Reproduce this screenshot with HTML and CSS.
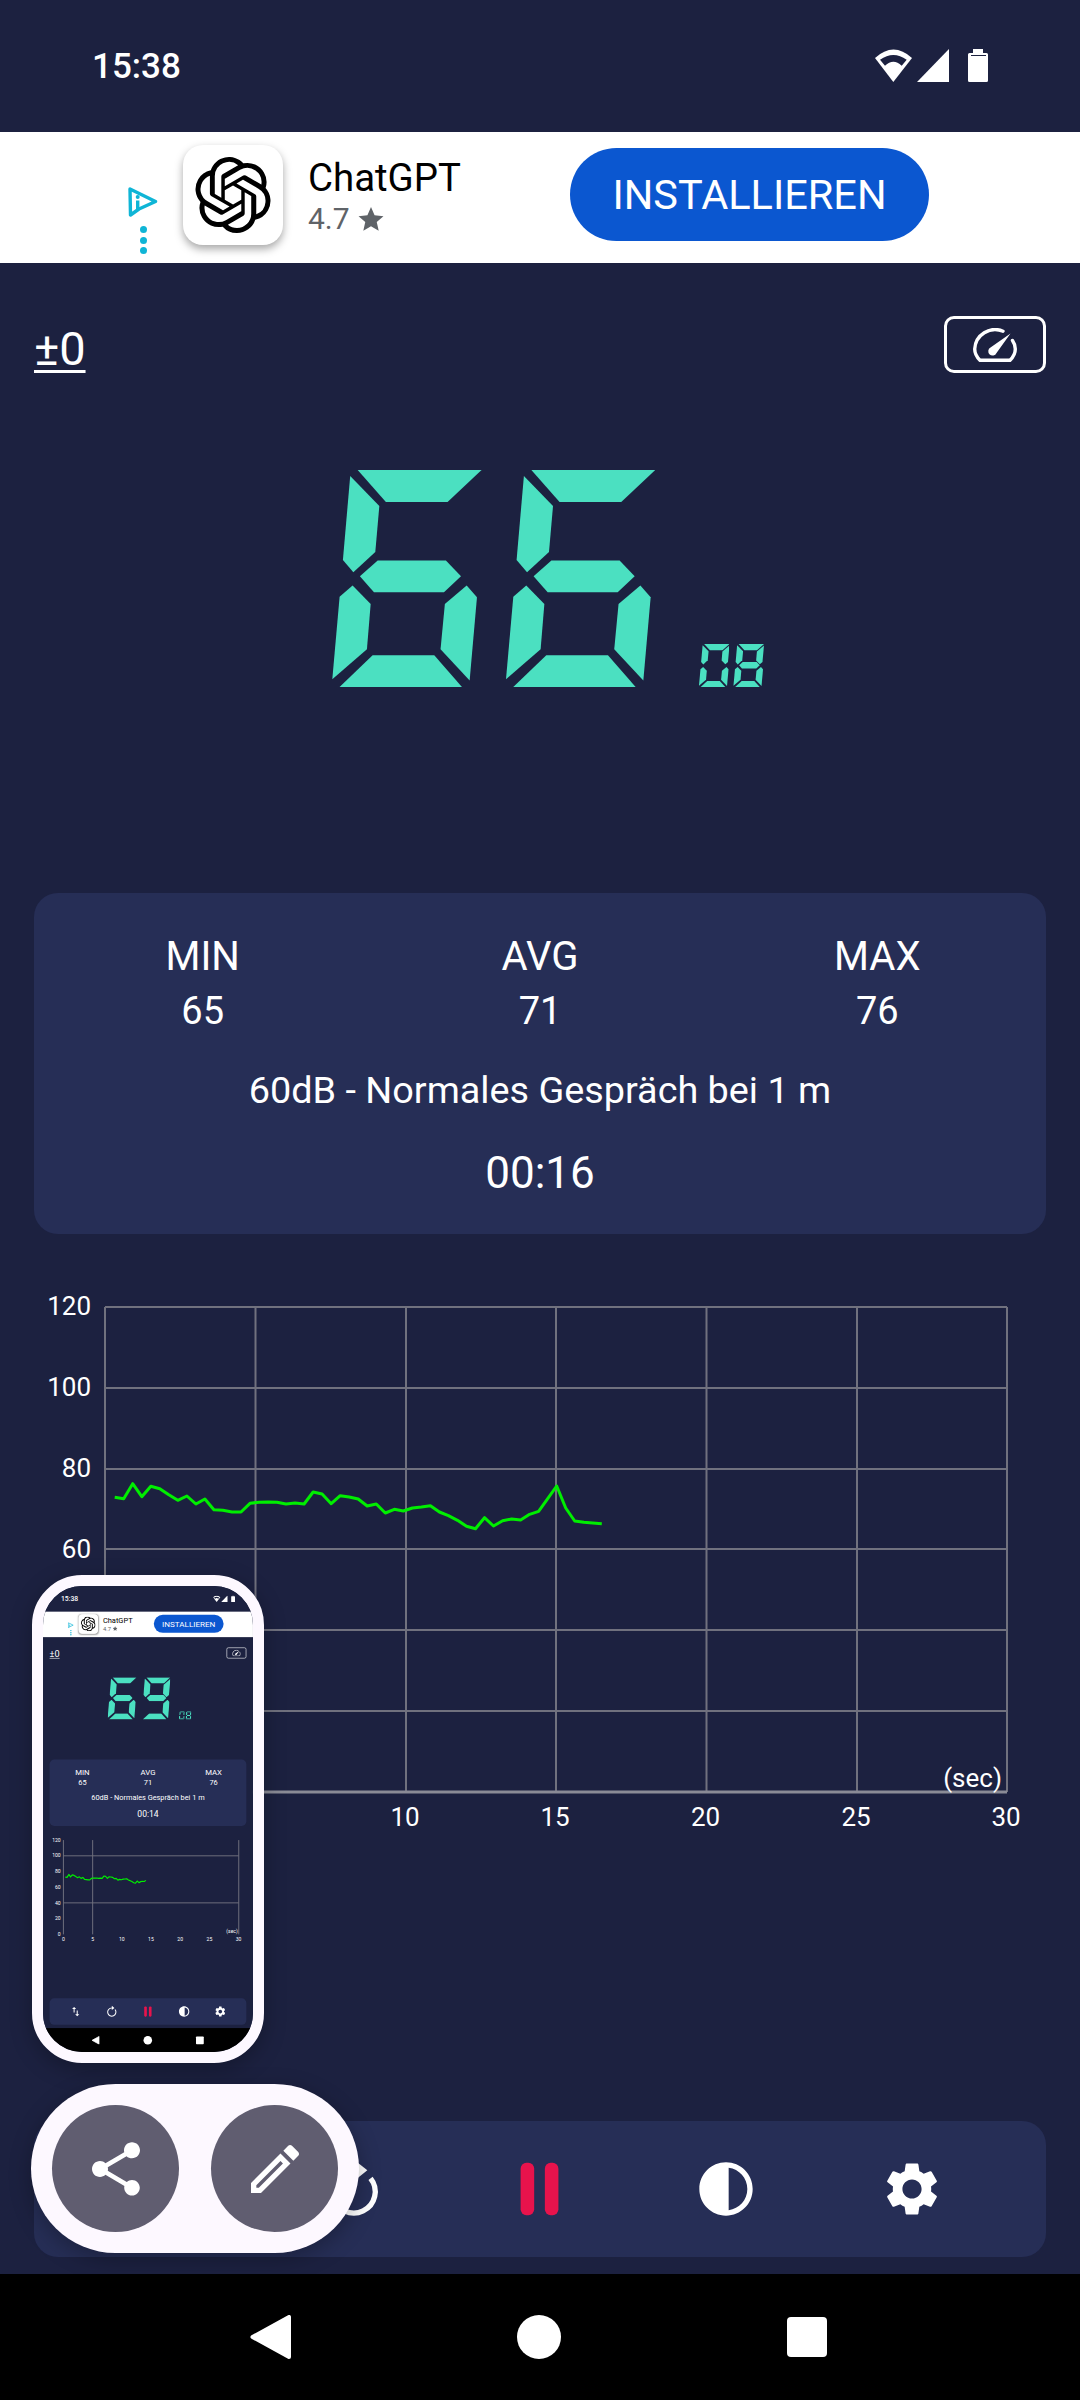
FILE: index.html
```html
<!DOCTYPE html>
<html lang="de">
<head>
    <meta charset="UTF-8">
    <meta name="viewport" content="width=device-width, initial-scale=1.0">
    <title>Schallpegelmesser</title>
    <link rel="stylesheet" href="styles.css">
</head>
<body>

<!-- shared icons -->
<svg class="icon-defs" width="0" height="0">
    <symbol id="i-status" viewBox="875 50 113 34">
        <path fill="#fff" d="M893.3 83L875 59Q893.5 42 912 59Z"/>
        <path fill="#1c2140" d="M880 60.7Q893.4 51.3 906.7 60.7L901.7 66.7Q893.4 58.7 885 66.7Z"/>
        <path fill="#fff" d="M917 83L949 50V83Z"/>
        <path fill="#fff" d="M973 50H983V54H986.5Q988 54 988 55.5V81.5Q988 83 986.5 83H969.5Q968 83 968 81.5V55.5Q968 54 969.5 54H973Z"/>
        <rect fill="#1c2140" x="971" y="56" width="15" height="1"/>
    </symbol>
    <symbol id="i-adchoice" viewBox="0 0 30 30">
        <path fill="none" stroke="#0fb5d6" stroke-width="3.4" stroke-linejoin="round" d="M2 2L27.500 14.500L11 22L2.500 28Z"/>
        <rect fill="#0fb5d6" x="8" y="13.500" width="3.400" height="9"/>
        <circle fill="#0fb5d6" cx="9.700" cy="10" r="2"/>
    </symbol>
    <symbol id="i-openai" viewBox="0 0 24 24">
        <path d="M22.2819 9.8211a5.9847 5.9847 0 0 0-.5157-4.9108 6.0462 6.0462 0 0 0-6.5098-2.9A6.0651 6.0651 0 0 0 4.9807 4.1818a5.9847 5.9847 0 0 0-3.9977 2.9 6.0462 6.0462 0 0 0 .7427 7.0966 5.98 5.98 0 0 0 .511 4.9107 6.051 6.051 0 0 0 6.5146 2.9001A5.9847 5.9847 0 0 0 13.2599 24a6.0557 6.0557 0 0 0 5.7718-4.2058 5.9894 5.9894 0 0 0 3.9977-2.9001 6.0557 6.0557 0 0 0-.7475-7.0729zm-9.022 12.6081a4.4755 4.4755 0 0 1-2.8764-1.0408l.1419-.0804 4.7783-2.7582a.7948.7948 0 0 0 .3927-.6813v-6.7369l2.02 1.1686a.071.071 0 0 1 .038.052v5.5826a4.504 4.504 0 0 1-4.4945 4.4944zm-9.6607-4.1254a4.4708 4.4708 0 0 1-.5346-3.0137l.142.0852 4.783 2.7582a.7712.7712 0 0 0 .7806 0l5.8428-3.3685v2.3324a.0804.0804 0 0 1-.0332.0615L9.74 19.9502a4.4992 4.4992 0 0 1-6.1408-1.6464zM2.3408 7.8956a4.485 4.485 0 0 1 2.3655-1.9728V11.6a.7664.7664 0 0 0 .3879.6765l5.8144 3.3543-2.0201 1.1685a.0757.0757 0 0 1-.071 0l-4.8303-2.7865A4.504 4.504 0 0 1 2.3408 7.872zm16.5963 3.8558L13.1038 8.364 15.1192 7.2a.0757.0757 0 0 1 .071 0l4.8303 2.7913a4.4944 4.4944 0 0 1-.6765 8.1042v-5.6772a.79.79 0 0 0-.407-.667zm2.0107-3.0231l-.142-.0852-4.7735-2.7818a.7759.7759 0 0 0-.7854 0L9.409 9.2297V6.8974a.0662.0662 0 0 1 .0284-.0615l4.8303-2.7866a4.4992 4.4992 0 0 1 6.6802 4.66zM8.3065 12.863l-2.02-1.1638a.0804.0804 0 0 1-.038-.0567V6.0742a4.4992 4.4992 0 0 1 7.3757-3.4537l-.142.0805L8.704 5.459a.7948.7948 0 0 0-.3927.6813zm1.0976-2.3654l2.602-1.4998 2.6069 1.4998v2.9994l-2.5974 1.4997-2.6067-1.4997Z"/>
    </symbol>
    <symbol id="i-star" viewBox="0 0 24 24">
        <path d="M12 1l3.3 7.6 8.2.8-6.2 5.4 1.8 8.1L12 18.6l-7.1 4.3 1.8-8.1L.5 9.400l8.200-.8z"/>
    </symbol>
    <symbol id="i-gauge" viewBox="0 0 44 34">
        <path fill="none" stroke="#fff" stroke-width="3.4" stroke-linecap="round" stroke-linejoin="round" d="M30 3.200A20.500 20.500 0 0 0 1.700 21Q1.700 27 7 32.300H37Q42.300 27 42.300 21Q42.300 16.500 39.500 12.500"/>
        <path fill="#fff" d="M37.500 5.500L23.500 25A4.300 4.300 0 1 1 17.500 19.500Z"/>
    </symbol>
    <symbol id="i-swap" viewBox="0 0 24 24">
        <path fill="#fff" d="M16 17.010V10h-2v7.010h-3L15 21l4-3.990h-3zM9 3L5 6.990h3V14h2V6.990h3L9 3z"/>
    </symbol>
    <symbol id="i-refresh" viewBox="0 0 24 24">
        <path fill="none" stroke="#fff" stroke-width="2" d="M18.200 8A8 8 0 1 1 12 5"/>
        <path fill="#fff" d="M12 1v8l5-4z"/>
    </symbol>
    <symbol id="i-pause" viewBox="0 0 66 66">
        <rect fill="#e8134c" x="13" y="6" width="14" height="54" rx="6"/>
        <rect fill="#e8134c" x="38" y="6" width="14" height="54" rx="6"/>
    </symbol>
    <symbol id="i-contrast" viewBox="0 0 24 24">
        <path fill="#fff" d="M12 22c5.520 0 10-4.480 10-10S17.520 2 12 2 2 6.480 2 12s4.480 10 10 10zm1-17.930c3.940.49 7 3.850 7 7.930s-3.050 7.440-7 7.930V4.070z"/>
    </symbol>
    <symbol id="i-settings" viewBox="0 0 24 24">
        <path fill="#fff" d="M19.140 12.940c.04-.3.06-.61.06-.94 0-.32-.02-.64-.07-.94l2.030-1.580c.18-.14.23-.41.12-.61l-1.920-3.320c-.12-.22-.37-.29-.59-.22l-2.390.96c-.5-.38-1.030-.7-1.620-.94l-.36-2.540c-.04-.24-.24-.41-.48-.41h-3.840c-.24 0-.43.17-.47.41l-.36 2.540c-.59.24-1.130.57-1.620.94l-2.390-.96c-.22-.08-.47 0-.59.22L2.740 8.870c-.12.21-.08.47.12.61l2.030 1.580c-.05.3-.09.63-.09.94s.02.64.07.94l-2.030 1.580c-.18.14-.23.41-.12.61l1.920 3.320c.12.22.37.29.59.22l2.390-.96c.5.38 1.030.7 1.620.94l.36 2.540c.05.24.24.41.48.41h3.840c.24 0 .44-.17.47-.41l.36-2.540c.59-.24 1.130-.56 1.620-.94l2.390.96c.22.08.47 0 .59-.22l1.920-3.320c.12-.22.07-.47-.12-.61l-2.010-1.580zM12 15.600c-1.980 0-3.600-1.620-3.600-3.600s1.620-3.600 3.600-3.600 3.600 1.620 3.600 3.600-1.620 3.600-3.600 3.600z"/>
    </symbol>
    <symbol id="i-back" viewBox="0 0 41 44">
        <path fill="#fff" stroke="#fff" stroke-width="4" stroke-linejoin="round" d="M2.500 22L39 2V42Z"/>
    </symbol>
    <symbol id="i-share" viewBox="0 0 24 24">
        <path fill="#fff" d="M18 16.080c-.76 0-1.440.3-1.960.77L8.910 12.700c.05-.23.09-.46.09-.7s-.04-.47-.09-.7l7.050-4.110c.54.5 1.250.81 2.040.81 1.660 0 3-1.340 3-3s-1.340-3-3-3-3 1.340-3 3c0 .24.04.47.09.7L8.040 9.810C7.500 9.310 6.790 9 6 9c-1.660 0-3 1.340-3 3s1.340 3 3 3c.79 0 1.500-.31 2.040-.81l7.120 4.160c-.05.21-.08.43-.08.65 0 1.610 1.310 2.920 2.920 2.920 1.610 0 2.920-1.310 2.920-2.920s-1.310-2.920-2.920-2.920z"/>
    </symbol>
    <symbol id="i-edit" viewBox="0 0 24 24">
        <path fill="#fff" d="M14.060 9.020l.92.92L5.920 19H5v-.92l9.060-9.060M17.660 3c-.25 0-.51.1-.7.29l-1.830 1.830 3.750 3.750 1.830-1.830c.39-.39.39-1.020 0-1.410l-2.340-2.340c-.2-.2-.45-.29-.71-.29zm-3.600 3.190L3 17.250V21h3.750L17.810 9.940l-3.750-3.750z"/>
    </symbol>
</svg>

<div class="screen">
    <div class="status">
        <span class="status-time">15:38</span>
        <svg class="status-icons"><use href="#i-status"/></svg>
    </div>

    <div class="ad">
        <div class="ad-choice">
            <svg class="ad-choice-icon"><use href="#i-adchoice"/></svg>
            <i class="ad-dot"></i><i class="ad-dot"></i><i class="ad-dot"></i>
        </div>
        <div class="ad-logo"><svg class="ad-logo-mark"><use href="#i-openai"/></svg></div>
        <div class="ad-text">
            <div class="ad-name">ChatGPT</div>
            <div class="ad-rating">4.7 <svg class="ad-star"><use href="#i-star"/></svg></div>
        </div>
        <div class="ad-button">INSTALLIEREN</div>
    </div>

    <div class="top-row">
        <span class="offset">±0</span>
        <div class="gauge-box"><svg class="gauge-icon"><use href="#i-gauge"/></svg></div>
    </div>

    <div class="display">
        <div class="digit"><span class="digit-text">6</span><i class="seg a"></i><i class="seg f"></i><i class="seg g"></i><i class="seg e"></i><i class="seg c"></i><i class="seg d"></i></div>
        <div class="digit"><span class="digit-text">6</span><i class="seg a"></i><i class="seg f"></i><i class="seg g"></i><i class="seg e"></i><i class="seg c"></i><i class="seg d"></i></div>
        <div class="unit">
            <div class="digit small"><span class="digit-text">D</span><i class="seg a"></i><i class="seg b"></i><i class="seg f"></i><i class="seg e"></i><i class="seg c"></i><i class="seg d"></i></div>
            <div class="digit small"><span class="digit-text">B</span><i class="seg a"></i><i class="seg b"></i><i class="seg f"></i><i class="seg g"></i><i class="seg e"></i><i class="seg c"></i><i class="seg d"></i></div>
        </div>
    </div>

    <div class="stats">
        <div class="stats-grid">
            <div class="stat-label">MIN</div>
            <div class="stat-label">AVG</div>
            <div class="stat-label">MAX</div>
            <div class="stat-value">65</div>
            <div class="stat-value">71</div>
            <div class="stat-value">76</div>
        </div>
        <div class="stats-desc">60dB - Normales Gespräch bei 1 m</div>
        <div class="stats-timer">00:16</div>
    </div>

    <!-- labels under the preview are left out -->
    <svg class="chart" viewBox="0 1280 1080 560">
        <path class="grid" d="M105 1307H1007M105 1388H1007M105 1469H1007M105 1549H1007M105 1630H1007M105 1711H1007M105 1307V1792M255.500 1307V1792M406 1307V1792M556 1307V1792M706.500 1307V1792M857 1307V1792M1007 1307V1792"/>
        <path class="grid-base" d="M105 1792H1007"/>
        <g class="axis-y">
            <text x="91" y="1315">120</text>
            <text x="91" y="1396">100</text>
            <text x="91" y="1477">80</text>
            <text x="91" y="1558">60</text>
        </g>
        <g class="axis-x">
            <text x="405" y="1826">10</text>
            <text x="555" y="1826">15</text>
            <text x="705.500" y="1826">20</text>
            <text x="856" y="1826">25</text>
            <text x="1006" y="1826">30</text>
        </g>
        <text class="axis-unit" x="1002" y="1787">(sec)</text>
        <polyline class="trace" points="114.7,1497.3 123.7,1498.7 132.7,1483.7 141.8,1496.7 150.8,1486.3 159.8,1488.7 168.8,1494.7 177.8,1500.3 186.9,1496 195.9,1504 204.9,1499 213.9,1509.7 222.9,1510.3 232,1512 241,1512 250,1503.3 259,1502.3 268,1502 277,1502.3 286,1504 295.1,1503 304.1,1504 313.1,1492 322.1,1494 331.2,1503.7 340.2,1495.7 349.2,1497 358.2,1499 367.2,1506 376.3,1504 385.3,1513 394.3,1509.3 403.3,1511 412.4,1508 421.4,1507 430.4,1505.7 439.4,1512 448.4,1515.7 457.5,1520.3 466.5,1526.3 475.5,1528.7 484.5,1517.7 493.5,1526 502.6,1520.7 511.6,1519 520.6,1520 529.6,1514.3 538.6,1511.3 547.7,1498.7 556.7,1486 565.7,1508 574.7,1521 583.8,1522.3 592.8,1523 601.8,1523.7"/>
    </svg>

    <div class="toolbar">
        <svg class="tool-icon"><use href="#i-swap"/></svg>
        <svg class="tool-icon"><use href="#i-refresh"/></svg>
        <svg class="tool-icon"><use href="#i-pause"/></svg>
        <svg class="tool-icon"><use href="#i-contrast"/></svg>
        <svg class="tool-icon"><use href="#i-settings"/></svg>
    </div>

    <div class="nav">
        <svg class="nav-back"><use href="#i-back"/></svg>
        <i class="nav-home"></i>
        <i class="nav-recent"></i>
    </div>
</div>

<!-- screenshot preview, same page at a fifth of the size -->
<div class="preview">
    <div class="screen preview-screen">
        <div class="status">
            <span class="status-time">15:38</span>
            <svg class="status-icons"><use href="#i-status"/></svg>
        </div>

        <div class="ad">
            <div class="ad-choice">
                <svg class="ad-choice-icon"><use href="#i-adchoice"/></svg>
                <i class="ad-dot"></i><i class="ad-dot"></i><i class="ad-dot"></i>
            </div>
            <div class="ad-logo"><svg class="ad-logo-mark"><use href="#i-openai"/></svg></div>
            <div class="ad-text">
                <div class="ad-name">ChatGPT</div>
                <div class="ad-rating">4.7 <svg class="ad-star"><use href="#i-star"/></svg></div>
            </div>
            <div class="ad-button">INSTALLIEREN</div>
        </div>

        <div class="top-row">
            <span class="offset">±0</span>
            <div class="gauge-box"><svg class="gauge-icon"><use href="#i-gauge"/></svg></div>
        </div>

        <div class="display">
            <div class="digit"><span class="digit-text">6</span><i class="seg a"></i><i class="seg f"></i><i class="seg g"></i><i class="seg e"></i><i class="seg c"></i><i class="seg d"></i></div>
            <div class="digit"><span class="digit-text">9</span><i class="seg a"></i><i class="seg b"></i><i class="seg f"></i><i class="seg g"></i><i class="seg c"></i><i class="seg d"></i></div>
            <div class="unit">
                <div class="digit small"><span class="digit-text">D</span><i class="seg a"></i><i class="seg b"></i><i class="seg f"></i><i class="seg e"></i><i class="seg c"></i><i class="seg d"></i></div>
                <div class="digit small"><span class="digit-text">B</span><i class="seg a"></i><i class="seg b"></i><i class="seg f"></i><i class="seg g"></i><i class="seg e"></i><i class="seg c"></i><i class="seg d"></i></div>
            </div>
        </div>

        <div class="stats">
            <div class="stats-grid">
                <div class="stat-label">MIN</div>
                <div class="stat-label">AVG</div>
                <div class="stat-label">MAX</div>
                <div class="stat-value">65</div>
                <div class="stat-value">71</div>
                <div class="stat-value">76</div>
            </div>
            <div class="stats-desc">60dB - Normales Gespräch bei 1 m</div>
            <div class="stats-timer">00:14</div>
        </div>

        <svg class="chart" viewBox="0 1280 1080 560">
            <path class="grid" d="M105 1388H1007M105 1630H1007M105 1307V1792M255.500 1307V1792M1007 1307V1792"/>
            <g class="axis-y">
                <text x="91" y="1315">120</text>
                <text x="91" y="1396">100</text>
                <text x="91" y="1477">80</text>
                <text x="91" y="1558">60</text>
                <text x="91" y="1639">40</text>
                <text x="91" y="1720">20</text>
                <text x="91" y="1800">0</text>
            </g>
            <g class="axis-x">
                <text x="105" y="1826">0</text>
                <text x="255.500" y="1826">5</text>
                <text x="405" y="1826">10</text>
                <text x="555" y="1826">15</text>
                <text x="705.500" y="1826">20</text>
                <text x="856" y="1826">25</text>
                <text x="1006" y="1826">30</text>
            </g>
            <text class="axis-unit" x="1002" y="1787">(sec)</text>
            <polyline class="trace" points="114.7,1497.3 123.7,1498.7 132.7,1483.7 141.8,1496.7 150.8,1486.3 159.8,1488.7 168.8,1494.7 177.8,1500.3 186.9,1496 195.9,1504 204.9,1499 213.9,1509.7 222.9,1510.3 232,1512 241,1512 250,1503.3 259,1502.3 268,1502 277,1502.3 286,1504 295.1,1503 304.1,1504 313.1,1492 322.1,1494 331.2,1503.7 340.2,1495.7 349.2,1497 358.2,1499 367.2,1506 376.3,1504 385.3,1513 394.3,1509.3 403.3,1511 412.4,1508 421.4,1507 430.4,1505.7 439.4,1512 448.4,1515.7 457.5,1520.3 466.5,1526.3 475.5,1528.7 484.5,1517.7 493.5,1526 502.6,1520.7 511.6,1519 520.6,1520 529.6,1514.3"/>
        </svg>

        <div class="toolbar">
            <svg class="tool-icon"><use href="#i-swap"/></svg>
            <svg class="tool-icon"><use href="#i-refresh"/></svg>
            <svg class="tool-icon"><use href="#i-pause"/></svg>
            <svg class="tool-icon"><use href="#i-contrast"/></svg>
            <svg class="tool-icon"><use href="#i-settings"/></svg>
        </div>

        <div class="nav">
            <svg class="nav-back"><use href="#i-back"/></svg>
            <i class="nav-home"></i>
            <i class="nav-recent"></i>
        </div>
    </div>
</div>

<div class="share-pill">
    <div class="share-btn"><svg class="share-share"><use href="#i-share"/></svg></div>
    <div class="share-btn"><svg class="share-edit"><use href="#i-edit"/></svg></div>
</div>

</body>
</html>
```

FILE: styles.css
```css
body {
    margin: 0;
    position: relative;
    width: 1080px;
    height: 2400px;
    overflow: hidden;
    background-color: #1c2140;
    font-family: Roboto, 'Liberation Sans', sans-serif;
}
.icon-defs {
    position: absolute;
}
.screen {
    width: 1080px;
    height: 2400px;
    display: flex;
    flex-direction: column;
    background-color: #1c2140;
    color: #fff;
}

/* status bar */
.status {
    height: 132px;
    flex-shrink: 0;
    display: flex;
    align-items: center;
    justify-content: space-between;
    padding: 0 92px 0 92px;
}
.status-time {
    font-size: 35px;
    font-weight: 500;
}
.status-icons {
    width: 113px;
    height: 34px;
}

/* ad banner */
.ad {
    height: 131px;
    flex-shrink: 0;
    display: flex;
    align-items: flex-start;
    padding-left: 128px;
    background-color: #fff;
}
.ad-choice {
    width: 30px;
    margin-top: 55px;
    margin-right: 25px;
    display: flex;
    flex-direction: column;
    align-items: center;
}
.ad-choice-icon {
    width: 30px;
    height: 30px;
    margin-bottom: 9px;
}
.ad-dot {
    width: 7px;
    height: 7px;
    margin-bottom: 3.500px;
    border-radius: 50%;
    background-color: #0fb5d6;
}
.ad-logo {
    width: 100px;
    height: 100px;
    margin-top: 13px;
    display: flex;
    align-items: center;
    justify-content: center;
    border-radius: 20px;
    background-color: #fff;
    box-shadow: 0 4px 8px rgba(0, 0, 0, 0.35);
}
.ad-logo-mark {
    width: 76px;
    height: 76px;
}
.ad-text {
    margin-left: 25px;
    margin-top: 24px;
}
.ad-name {
    font-size: 38.400px;
    line-height: 44px;
    color: #000;
}
.ad-rating {
    display: flex;
    align-items: center;
    gap: 8px;
    margin-top: 1px;
    font-size: 30px;
    line-height: 36px;
    color: #5f6368;
}
.ad-star {
    width: 26px;
    height: 26px;
    fill: #5f6368;
}
.ad-button {
    width: 359px;
    height: 93px;
    margin-top: 16px;
    margin-left: auto;
    margin-right: 151px;
    display: flex;
    align-items: center;
    justify-content: center;
    border-radius: 47px;
    background-color: #0b57d0;
    color: #fff;
    font-size: 41.500px;
}

/* offset and gauge */
.top-row {
    margin-top: 53px;
    height: 57px;
    flex-shrink: 0;
    display: flex;
    align-items: center;
    justify-content: space-between;
    padding: 0 34px;
}
.offset {
    margin-top: 8px;
    font-size: 47px;
    text-decoration: underline;
    text-decoration-thickness: 3px;
    text-underline-offset: 5px;
}
.gauge-box {
    box-sizing: border-box;
    width: 102px;
    height: 57px;
    display: flex;
    align-items: center;
    justify-content: center;
    border: 3px solid #fff;
    border-radius: 10px;
}
.gauge-icon {
    width: 44px;
    height: 34px;
}

/* seven segment readout */
.display {
    margin-top: 97px;
    margin-left: 332.300px;
    height: 217.300px;
    flex-shrink: 0;
    display: flex;
    align-items: flex-end;
    gap: 24.400px;
}
.digit {
    position: relative;
    width: 149.300px;
    height: 217.300px;
    font-size: 200px;
    line-height: 217px;
    text-align: center;
}
.digit.small {
    width: 30.500px;
    height: 43.300px;
    font-size: 40px;
    line-height: 43px;
}
.digit-text {
    color: transparent;
}
.unit {
    display: flex;
    gap: 4px;
    margin-left: 19.300px;
}
.seg {
    position: absolute;
    inset: 0;
    background-color: #4be0c1;
}
.seg.a { clip-path: polygon(17% 0, 100% 0, 77.2% 14.7%, 35.9% 14.7%); }
.seg.b { clip-path: polygon(86.4% 46.9%, 74.3% 38.3%, 76.8% 17.5%, 100% 3.7%, 95.1% 41.7%); }
.seg.c { clip-path: polygon(90% 53.1%, 96.9% 58.6%, 92% 96.9%, 72.5% 82.5%, 75.4% 61.7%); }
.seg.d { clip-path: polygon(4.7% 100%, 27% 85.3%, 68.3% 85.3%, 87% 100%); }
.seg.e { clip-path: polygon(13.6% 53.1%, 25.7% 61.7%, 23.2% 82.5%, 0 96.3%, 4.9% 58.3%); }
.seg.f { clip-path: polygon(12% 2.8%, 31.5% 16.6%, 28.8% 37.7%, 14.1% 47.1%, 7.1% 41.4%); }
.seg.g { clip-path: polygon(18.5% 48.9%, 30.4% 41.6%, 76.1% 41.6%, 86.2% 48.9%, 74.8% 56.3%, 27.9% 56.3%); }

/* min avg max card */
.stats {
    box-sizing: border-box;
    margin: 205.700px 34px 0;
    height: 341px;
    flex-shrink: 0;
    padding-top: 40px;
    border-radius: 24px;
    background-color: #262e56;
    text-align: center;
}
.stats-grid {
    display: grid;
    grid-template-columns: repeat(3, 1fr);
    row-gap: 8px;
}
.stat-label {
    font-size: 40px;
    line-height: 48px;
}
.stat-value {
    font-size: 38px;
    line-height: 44px;
}
.stats-desc {
    margin-top: 33px;
    font-size: 37.800px;
    line-height: 48px;
}
.stats-timer {
    margin-top: 31px;
    font-size: 44px;
    line-height: 56px;
}

/* chart */
.chart {
    display: block;
    width: 1080px;
    height: 560px;
    flex-shrink: 0;
    margin-top: 46px;
}
.grid {
    fill: none;
    stroke: #70717e;
    stroke-width: 2;
}
.grid-base {
    fill: none;
    stroke: #8a8b96;
    stroke-width: 3;
}
.axis-y text,
.axis-x text,
.axis-unit {
    fill: #fff;
    font-size: 26px;
}
.axis-y text,
.axis-unit {
    text-anchor: end;
}
.axis-x text {
    text-anchor: middle;
}
.trace {
    fill: none;
    stroke: #00ee00;
    stroke-width: 3;
    stroke-linejoin: round;
}

/* bottom toolbar */
.toolbar {
    box-sizing: border-box;
    margin: auto 34px 17px;
    height: 136px;
    flex-shrink: 0;
    display: grid;
    grid-template-columns: repeat(5, 1fr);
    align-items: center;
    justify-items: center;
    padding: 0 41px;
    border-radius: 24px;
    background-color: #262e56;
}
.tool-icon {
    width: 64px;
    height: 64px;
}

/* android nav */
.nav {
    height: 126px;
    flex-shrink: 0;
    display: flex;
    align-items: center;
    justify-content: center;
    gap: 226px;
    padding-right: 3px;
    background-color: #000;
}
.nav-back {
    width: 41px;
    height: 44px;
}
.nav-home {
    width: 44px;
    height: 44px;
    border-radius: 50%;
    background-color: #fff;
}
.nav-recent {
    width: 40px;
    height: 40px;
    border-radius: 4px;
    background-color: #fff;
}

/* screenshot thumbnail over the page */
.preview {
    position: absolute;
    left: 32px;
    top: 1575px;
    box-sizing: border-box;
    width: 232px;
    height: 488px;
    overflow: hidden;
    border: 11px solid #fdf8ff;
    border-radius: 50px;
    box-shadow: 0 6px 22px rgba(0, 0, 0, 0.28);
}
.preview-screen {
    transform: scale(0.1944);
    transform-origin: 0 0;
}
.preview-screen .grid {
    stroke-width: 5;
}
.preview-screen .trace {
    stroke-width: 6;
}

/* share and edit buttons */
.share-pill {
    position: absolute;
    left: 31px;
    top: 2084px;
    box-sizing: border-box;
    width: 328px;
    height: 169px;
    display: flex;
    align-items: center;
    gap: 32px;
    padding: 0 21px;
    border-radius: 85px;
    background-color: #fdf8ff;
    box-shadow: 0 6px 22px rgba(0, 0, 0, 0.28);
}
.share-btn {
    width: 127px;
    height: 127px;
    flex-shrink: 0;
    display: flex;
    align-items: center;
    justify-content: center;
    border-radius: 50%;
    background-color: #605d70;
}
.share-share,
.share-edit {
    width: 64px;
    height: 64px;
}
```
